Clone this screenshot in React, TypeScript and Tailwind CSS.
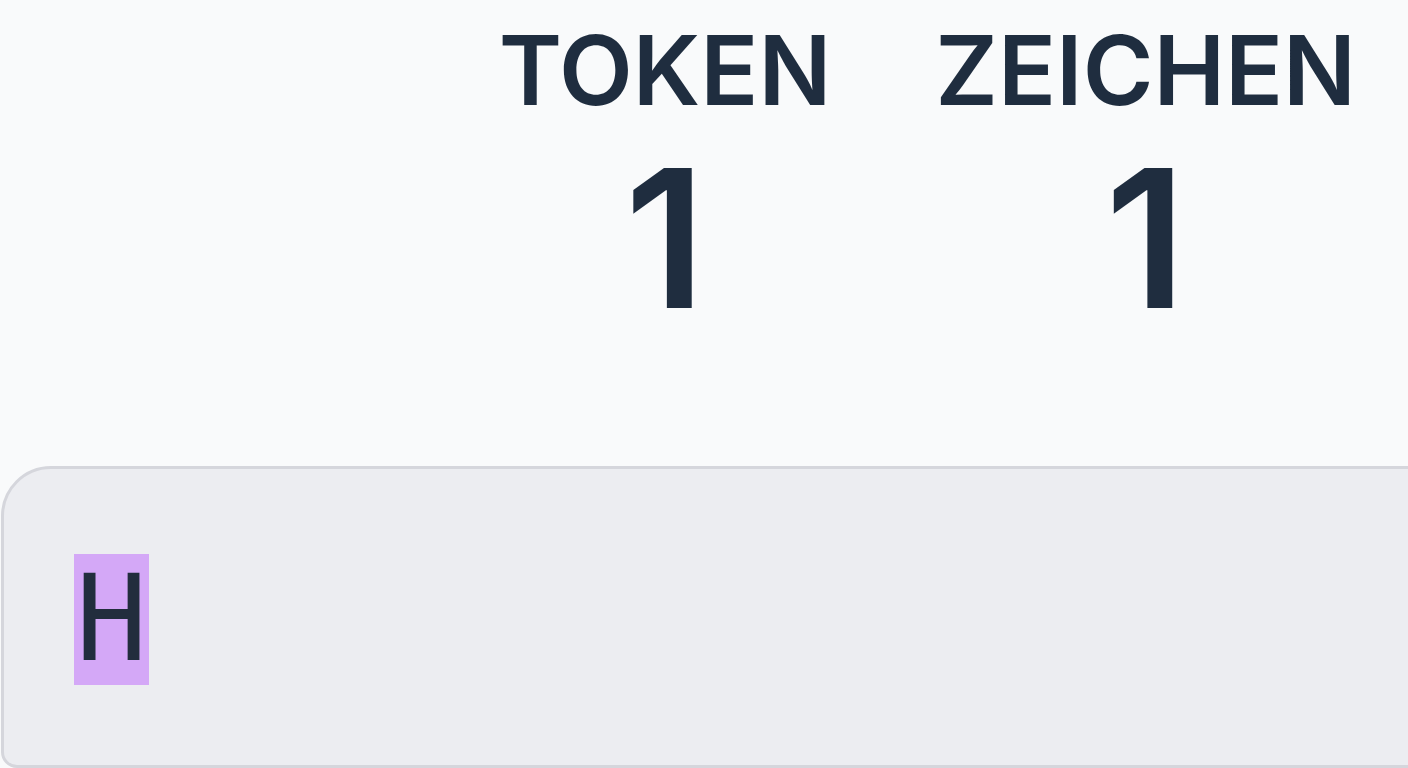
export default function App() {
  const stats = [
    { label: 'TOKEN', value: 1 },
    { label: 'ZEICHEN', value: 1 },
  ]

  return (
    <div className="h-[768px] w-[1408px] overflow-hidden bg-[#f9fafb] font-['Inter','Liberation_Sans',sans-serif] text-[#1f2d3f]">
      {/* Stats */}
      <div className="flex h-[466px] justify-end gap-[104px] pr-[52px] pt-[22px]">
        {stats.map(s => (
          <div key={s.label} className="flex flex-col items-center">
            <p className="text-[96px] font-semibold leading-[96px]">{s.label}</p>
            <p className="mt-[24px] text-[192px] font-semibold leading-[192px]">{s.value}</p>
          </div>
        ))}
      </div>

      {/* Token view */}
      <div className="ml-[1px] -mr-[40px] h-[302px] rounded-tl-[50px] rounded-bl-[16px] border-[3px] border-[#d5d6dc] bg-[#ecedf1] pl-[70px] pt-[85px]">
        <span className="inline-flex h-[131px] w-[75px] items-center justify-center bg-[#d4a8f7] font-['DejaVu_Sans_Mono',monospace] text-[119px] leading-none text-[#222d3d]">
          H
        </span>
      </div>
    </div>
  )
}
